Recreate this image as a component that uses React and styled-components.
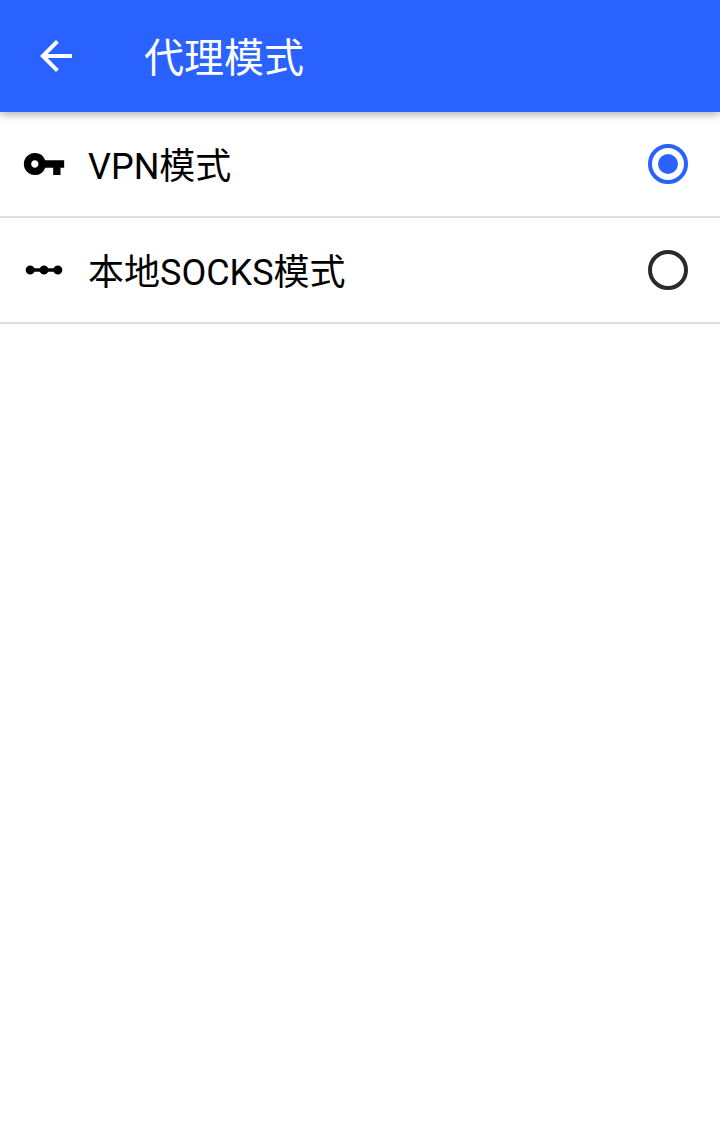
import React from "react"
import styled, { createGlobalStyle } from "styled-components"
import { MdArrowBack, MdVpnKey, MdLinearScale } from "react-icons/md"

const modes = [
  { id: "vpn", name: "VPN模式", Icon: MdVpnKey },
  { id: "socks", name: "本地SOCKS模式", Icon: MdLinearScale },
]

const App = () => {
  const [active, setActive] = React.useState("vpn")

  return (
    <>
      <GlobalStyle />
      <Toolbar>
        <BackButton aria-label="back">
          <MdArrowBack size={48} />
        </BackButton>
        <Title>代理模式</Title>
      </Toolbar>
      <List>
        {modes.map(({ id, name, Icon }) => (
          <Row key={id} onClick={() => setActive(id)}>
            <Icon size={44} />
            <Name>{name}</Name>
            <Radio $checked={active === id} />
          </Row>
        ))}
      </List>
    </>
  )
}

const GlobalStyle = createGlobalStyle`
  * {
    box-sizing: border-box;
  }
  body {
    margin: 0;
    min-height: 100vh;
    background: #fff;
    color: #000;
    font-family: Roboto, "Noto Sans CJK SC", sans-serif;
  }
`

const Toolbar = styled.header`
  position: relative; /* keeps the shadow above the list */
  display: flex;
  align-items: center;
  height: 112px;
  padding-left: 32px;
  background: #2962ff;
  color: #fff;
  box-shadow: 0 2px 9px rgba(0, 0, 0, 0.34);
`

const BackButton = styled.button`
  display: flex;
  padding: 0;
  border: 0;
  background: none;
  color: inherit;
`

const Title = styled.h1`
  margin: 0 0 0 64px;
  padding-top: 6px;
  font-size: 40px;
  font-weight: 400;
  line-height: 56px;
`

const List = styled.ul`
  margin: 0;
  padding: 0;
  list-style: none;
`

const Row = styled.li`
  display: flex;
  align-items: center;
  height: 106px;
  padding: 0 32px 0 22px;
  border-bottom: 2px solid #dedede;
`

const Name = styled.span`
  flex: 1;
  margin-left: 22px;
  padding-top: 6px;
  font-size: 36px;
  line-height: 48px;
`

const Radio = styled.span`
  display: flex;
  align-items: center;
  justify-content: center;
  width: 40px;
  height: 40px;
  border: 4px solid ${({ $checked }) => ($checked ? "#2962ff" : "#2a2a2a")};
  border-radius: 50%;
  &::after {
    content: "";
    width: 20px;
    height: 20px;
    border-radius: 50%;
    background: ${({ $checked }) => ($checked ? "#2962ff" : "transparent")};
  }
`

export default App
